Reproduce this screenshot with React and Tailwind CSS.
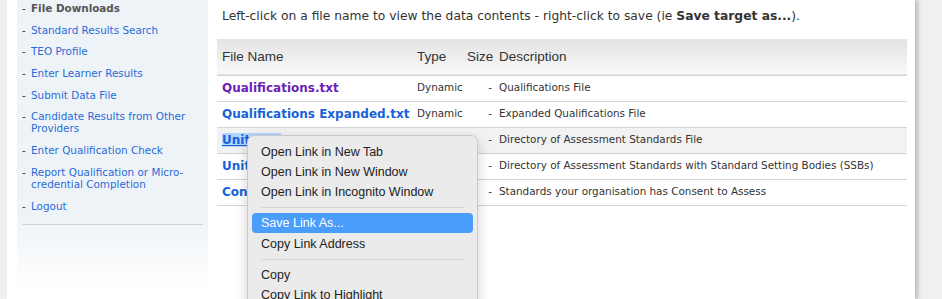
import React from "react";

const sideLinks = [
  "Standard Results Search",
  "TEO Profile",
  "Enter Learner Results",
  "Submit Data File",
  "Candidate Results from Other Providers",
  "Enter Qualification Check",
  "Report Qualification or Micro-credential Completion",
  "Logout",
];

const files = [
  { name: "Qualifications.txt", visited: true, desc: "Qualifications File" },
  { name: "Qualifications Expanded.txt", desc: "Expanded Qualifications File" },
  { name: "Units.txt", selected: true, hover: true, desc: "Directory of Assessment Standards File" },
  { name: "Units SSB.txt", desc: "Directory of Assessment Standards with Standard Setting Bodies (SSBs)" },
  { name: "Consent.txt", desc: "Standards your organisation has Consent to Assess" },
];

const verdana = "font-['DejaVu_Sans',Verdana,sans-serif]";

const Sidebar = () => (
  <div className={`w-[191px] ml-[10px] h-full bg-[linear-gradient(to_bottom,#eef3f8_72%,#ffffff_97%)] ${verdana} text-[10.4px] leading-[12px]`}>
    <ul className="pt-[2px] pl-[5px] pr-[6px] flex flex-col gap-[9.7px]">
      <li className="flex">
        <span className="w-[9px] shrink-0 text-[#333]">-</span>
        <span className="font-bold text-[#555]">File Downloads</span>
      </li>
      {sideLinks.map((l) => (
        <li key={l} className="flex">
          <span className="w-[9px] shrink-0 text-[#333]">-</span>
          <a className="text-[#2a6bd9]">{l}</a>
        </li>
      ))}
    </ul>
    <div className="mt-[12px] mx-[5px] border-t border-[#cfd3d8]" />
  </div>
);

const ContextMenu = () => {
  const item = "h-[20px] flex items-center px-[9px] rounded-[4px]";
  return (
    <div className="absolute left-[30px] top-[96px] w-[231px] h-[200px] bg-[#ebebeb] rounded-[7px] border border-[#c9c9c9] shadow-[0_4px_14px_rgba(0,0,0,0.18)] px-[4px] pt-[6px] font-['Liberation_Sans',Helvetica,sans-serif] text-[12.5px] text-[#222]">
      <div className={item}>Open Link in New Tab</div>
      <div className={item}>Open Link in New Window</div>
      <div className={item}>Open Link in Incognito Window</div>
      <div className="h-[11px] flex items-center px-[9px]">
        <div className="w-full border-t border-[#d3d3d3]" />
      </div>
      <div className={`${item} bg-[#4b9dfb] text-white`}>Save Link As...</div>
      <div className={`${item} mt-[1px]`}>Copy Link Address</div>
      <div className="h-[11px] flex items-center px-[9px]">
        <div className="w-full border-t border-[#d3d3d3]" />
      </div>
      <div className={item}>Copy</div>
      <div className={item}>Copy Link to Highlight</div>
    </div>
  );
};

const FileTable = () => (
  <div className="relative mt-[15px] w-[690px]">
    <table className="w-full border-collapse table-fixed">
      <thead>
        <tr className="h-[36px] bg-[linear-gradient(to_bottom,#e3e3e3,#f9f9f9)] border-b border-[#d4d4d4] font-['Liberation_Sans',Arial,sans-serif] text-[13.5px] text-[#333] text-left">
          <th className="font-normal pl-[5px] w-[195px]">File Name</th>
          <th className="font-normal pl-[5px] w-[50px]">Type</th>
          <th className="font-normal pl-[5px] w-[32px] whitespace-nowrap">Size</th>
          <th className="font-normal pl-[5px]">Description</th>
        </tr>
      </thead>
      <tbody className={`${verdana} text-[10.4px] text-[#333]`}>
        {files.map((f) => (
          <tr key={f.name} className={`h-[26px] border-b border-[#d4d4d4] ${f.hover ? "bg-[#f2f2f2]" : ""}`}>
            <td className="pl-[5px] whitespace-nowrap">
              <a className={`font-bold text-[12px] ${f.visited ? "text-[#6a1fb6]" : "text-[#1762d8]"} ${f.selected ? "bg-[#b4d5fe] underline" : ""}`}>
                {f.name}
              </a>
            </td>
            <td className="pl-[5px]">Dynamic</td>
            <td className="text-right pr-[2px]">-</td>
            <td className="pl-[5px] whitespace-nowrap">{f.desc}</td>
          </tr>
        ))}
      </tbody>
    </table>
    <ContextMenu />
  </div>
);

export default function App() {
  return (
    <div className="h-[299px] w-[942px] overflow-hidden bg-[#f0f0f0] pl-[7px]">
      <div className="h-full w-[908px] bg-white flex shadow-[3px_0_4px_rgba(0,0,0,0.22)]">
        <Sidebar />
        <div className="ml-[9px] pt-[9px]">
          <p className={`${verdana} text-[12.3px] text-[#333] pl-[5px] leading-[15px]`}>
            Left-click on a file name to view the data contents - right-click to save (ie <b>Save target as...</b>).
          </p>
          <FileTable />
        </div>
      </div>
    </div>
  );
}
